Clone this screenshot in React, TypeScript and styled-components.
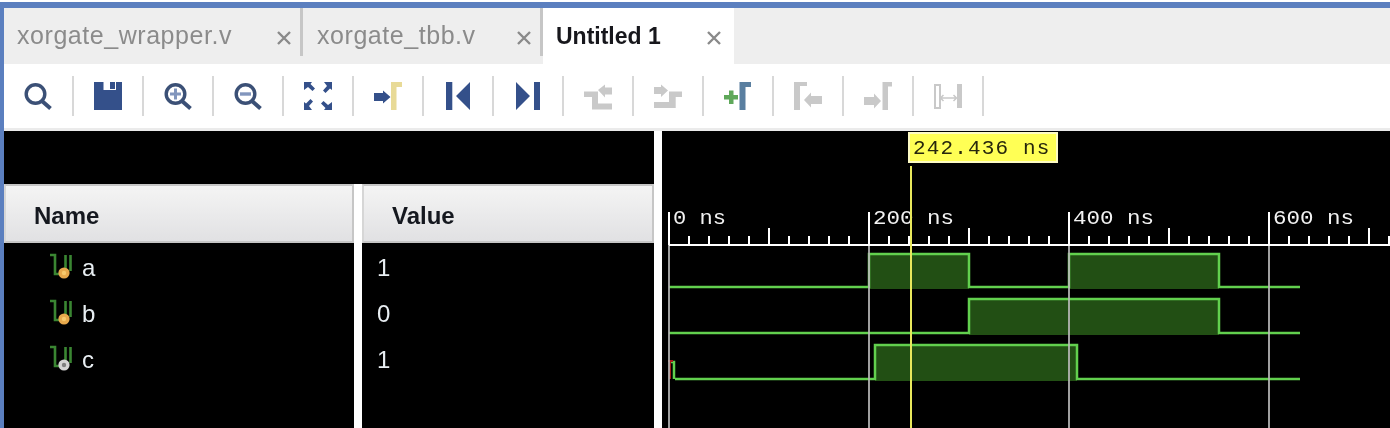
import React from "react";
import styled, { createGlobalStyle } from "styled-components";

const Global = createGlobalStyle`
  html, body { margin: 0; padding: 0; background: #fff; overflow: hidden; }
  body { font-family: "Liberation Sans", Arial, sans-serif; }
`;

const Frame = styled.div`
  width: 1390px; height: 428px; box-sizing: border-box; padding-top: 2px; overflow: hidden;
  display: flex; flex-direction: column; background: #fff;
`;
const Window = styled.div`
  flex: 1; min-height: 0; display: flex; flex-direction: column;
  border-top: 6px solid #5b7fbf; border-left: 4px solid #5b7fbf;
  filter: blur(0.45px);
`;
const TabBar = styled.div`
  height: 56px; flex: none; display: flex; background: #eeeeee;
`;
const Tab = styled.div<{ $w: number; $pad: number; $active?: boolean; $sep?: boolean }>`
  width: ${p => p.$w}px; box-sizing: border-box; height: ${p => (p.$active ? 56 : 48)}px;
  align-self: flex-start;
  display: flex; align-items: center; justify-content: space-between;
  padding-left: ${p => p.$pad}px; padding-right: ${p => (p.$active ? 12 : 8)}px;
  padding-top: ${p => (p.$active ? 0 : 8)}px;
  background: ${p => (p.$active ? "#fff" : "#eeeeee")};
  border-right: ${p => (p.$sep ? "3px solid #c6c6c6" : "none")};
`;
const TabLabel = styled.span<{ $active?: boolean }>`
  font-size: ${p => (p.$active ? 23 : 25)}px;
  font-weight: ${p => (p.$active ? 700 : 400)};
  letter-spacing: ${p => (p.$active ? 0 : 0.55)}px;
  color: ${p => (p.$active ? "#17171c" : "#8b8b8b")};
  line-height: 1; white-space: nowrap;
  position: relative; top: ${p => (p.$active ? 0 : -1)}px;
`;
const CloseIcon = styled.svg`
  width: 16px; height: 16px; flex: none; position: relative; top: 2px;
`;
const Toolbar = styled.div`
  height: 64px; flex: none; display: flex; align-items: center; background: #fff;
`;
const ToolCell = styled.div`
  width: 70px; height: 40px; box-sizing: border-box; flex: none;
  display: flex; align-items: center; justify-content: center;
  border-right: 2px solid #d8d8d8;
`;
const ToolIcon = styled.svg`
  width: 28px; height: 28px; display: block;
`;
const Strip = styled.div`
  height: 3px; flex: none; background: #ebebeb;
`;
const Panels = styled.div`
  flex: 1; min-height: 0; display: grid;
  grid-template-columns: 650px 1fr; column-gap: 8px; background: #fff;
`;
const LeftPane = styled.div`
  display: flex; flex-direction: column; min-height: 0;
`;
const BlackBand = styled.div`
  height: 53px; flex: none; background: #000;
`;
const TableColumns = styled.div`
  flex: 1; min-height: 0; display: grid; grid-template-columns: 350px 292px; column-gap: 8px;
`;
const Column = styled.div`
  background: #000; min-width: 0;
`;
const HeaderCell = styled.div<{ $pad: number }>`
  height: 59px; box-sizing: border-box; display: flex; align-items: center;
  padding-left: ${p => p.$pad}px; padding-top: 4px;
  background: linear-gradient(#f4f4f4, #e1e1e3);
  border: 2px solid #c6c6c6; border-left-color: #d6d6d6;
  font-size: 24px; font-weight: 700; color: #15181f;
`;
const Rows = styled.div`
  padding-top: 2px;
`;
const Row = styled.div<{ $pad: number }>`
  height: 46px; display: flex; align-items: center; gap: 9px;
  padding-left: ${p => p.$pad}px; color: #e8eef2; font-size: 24px;
`;
const SignalSvg = styled.svg`
  width: 23px; height: 28px; flex: none; position: relative; top: -1px;
`;
const Wave = styled.div`
  background: #000; position: relative; overflow: hidden;
`;
const WaveSvg = styled.svg`
  display: block; width: 728px; height: 297px;
`;
const TimeTag = styled.div`
  position: absolute; left: 246px; top: 1px; width: 150px; height: 31px; box-sizing: border-box;
  background: #ffff55; border: 2px solid #fdfbc4;
  display: flex; align-items: center; padding-left: 3px; padding-top: 2px;
  font-family: "Liberation Mono", monospace; font-size: 21px; letter-spacing: 1.15px;
  color: #26260c; white-space: nowrap;
`;

const BLUE = "#34508a";
const GREY = "#c9c9c9";

const icons: React.ReactNode[] = [
  <g key="s" fill="none" stroke="#3b5076">
    <circle cx="11.5" cy="12" r="9.3" strokeWidth="3.4" />
    <path d="M18 19l8.5 7.5" strokeWidth="4" />
  </g>,
  <path key="f" fill={BLUE} fillRule="evenodd" d="M0 0h9.5v8H22V0h6v28H0zM16 0h5v7h-5z" />,
  <g key="zi" fill="none" stroke="#3b5076">
    <circle cx="11.5" cy="12" r="9.3" strokeWidth="3.4" />
    <path d="M18 19l8.500 7.500" strokeWidth="4" />
    <path d="M6 12h11M11.500 6.500v11" stroke="#8296bd" strokeWidth="3" />
  </g>,
  <g key="zo" fill="none" stroke="#3b5076">
    <circle cx="11.5" cy="12" r="9.3" strokeWidth="3.4" />
    <path d="M18 19l8.500 7.500" strokeWidth="4" />
    <path d="M6 12h11" stroke="#8296bd" strokeWidth="3.4" />
  </g>,
  <path key="fit" fill={BLUE} d="M0 0h8l-1.500 2 4.500 4.500-2.500 2.500L4 5 0 8zM28 0v8l-2-1.500-4.500 4.500-2.500-2.500L23 4 20 0zM0 28v-8l2 1.500 4.500-4.500 2.500 2.500L5 24l3 4zM28 28h-8l1.500-2-4.500-4.500 2.500-2.500L24 23l4-3z" />,
  <g key="gm">
    <path fill="#e8da97" d="M17 0h11v5h-5.500v23H17z" />
    <path fill={BLUE} d="M0 11h9V8.500l7.500 6.500L9 21.500V19H0z" />
  </g>,
  <path key="ss" fill={BLUE} d="M2 0h6.300v28H2zM26 0v28L12 14z" />,
  <path key="se" fill={BLUE} d="M20 0h6v28h-6zM2 0v28l14-14z" />,
  <path key="pt" fill={GREY} d="M0 9.500h14v12h14v6H8V15H0zM14 8l7-5.500V5.500h7v7h-7v3z" />,
  <path key="nt" fill={GREY} d="M28 9.500H15V20H0v6h21.700V15H28zM0 5h7V2.500L14 8.500l-7 6.500v-3H0z" />,
  <g key="am">
    <path fill="#5a7fa0" d="M15.500 0H27v5h-5.500v23h-6z" />
    <path fill="#5fa85a" d="M5 8.500h4.500V13H14v4.500H9.500V22H5v-4.500H0V13h5z" />
  </g>,
  <g key="pm" fill={GREY}>
    <path d="M0 0h13v4H6v24H0z" />
    <path d="M10 18l7-7.500V14h11v8H17v3.500z" />
  </g>,
  <g key="nm" fill={GREY}>
    <path d="M18.500 0H28v4.500h-4v23.500h-5.500z" />
    <path d="M0 15h10v-3.500l7 7.500-7 7.500V23H0z" />
  </g>,
  <g key="d">
    <rect x="1" y="3" width="5" height="23" fill="#fff" stroke={GREY} strokeWidth="2" />
    <rect x="23" y="2" width="5.500" height="24" fill={GREY} />
    <path fill="none" stroke={GREY} strokeWidth="1.500" d="M6 16h17M9.500 13l-3 3 3 3M19.500 13l3 3-3 3" />
  </g>,
];

const Close = () => (
  <CloseIcon viewBox="0 0 16 16">
    <path d="M2 2l12 12M14 2L2 14" stroke="#8a8a8a" strokeWidth="2.4" fill="none" />
  </CloseIcon>
);

const Signal = ({ dot, core }: { dot: string; core: string }) => (
  <SignalSvg viewBox="0 0 23 28">
    <path d="M0 2h5v19h14M15.500 2v16M20.500 2v16" fill="none" stroke="#3a8632" strokeWidth="2.6" />
    <circle cx="14" cy="20" r="5.600" fill={dot} />
    <circle cx="14" cy="20" r="2.200" fill={core} />
  </SignalSvg>
);

const signals = [
  { name: "a", value: "1", dot: "#e8a94c", core: "#f7c96c" },
  { name: "b", value: "0", dot: "#e8a94c", core: "#f7c96c" },
  { name: "c", value: "1", dot: "#d4d4d4", core: "#808080" },
];

const LINE = "#62d04e";
const FILL = "#224f14";
const END = 1300;

const traces = [
  { low: 287, high: 254, pulses: [[869, 969], [1069, 1219]] },
  { low: 333, high: 299, pulses: [[969, 1219]] },
  { low: 379, high: 345, pulses: [[875, 1077]] },
];

const tracePath = (t: { low: number; high: number; pulses: number[][] }, start: number) => {
  let d = `M${start} ${t.low}`;
  t.pulses.forEach(([a, b]) => {
    d += `H${a}V${t.high}H${b}V${t.low}`;
  });
  return d + `H${END}`;
};

const ticks = Array.from({ length: 37 }, (_, i) => 669 + i * 20);
const labels = [
  { x: 669, text: "0 ns", len: 53 },
  { x: 869, text: "200 ns", len: 81 },
  { x: 1069, text: "400 ns", len: 81 },
  { x: 1269, text: "600 ns", len: 81 },
];

const Waveform = () => (
  <WaveSvg viewBox="662 131 728 297">
    {traces.map((t, i) =>
      t.pulses.map(([a, b]) => (
        <rect key={`${i}-${a}`} x={a} y={t.high} width={b - a} height={t.low - t.high + 2} fill={FILL} />
      ))
    )}
    {traces.map((t, i) => (
      <path key={i} d={tracePath(t, i === 2 ? 675 : 669)} fill="none" stroke={LINE} strokeWidth="2.500" />
    ))}
    <path d="M669 362h5v17" fill="none" stroke={LINE} strokeWidth="2.500" />
    <path d="M668 361h5M670 361v18" fill="none" stroke="#a51a1a" strokeWidth="2" />
    {labels.map(l => (
      <path key={l.x} d={`M${l.x} 245V428`} stroke="#bcbcbc" strokeWidth="2" opacity="0.85" />
    ))}
    {ticks.map((x, i) => (
      <path key={x} d={`M${x} ${i % 10 === 0 ? 212 : i % 5 === 0 ? 228 : 236}V245`} stroke="#fff" strokeWidth="2" />
    ))}
    <path d="M669 245H1390" stroke="#fff" strokeWidth="2" />
    {labels.map(l => (
      <text key={l.text} x={l.x + 4} y="224" fill="#f2f2f2" fontFamily="Liberation Mono, monospace" fontSize="20"
        textLength={l.len} lengthAdjust="spacingAndGlyphs">{l.text}</text>
    ))}
    <path d="M911 166V428" stroke="#e8e85c" strokeWidth="2" />
  </WaveSvg>
);

export default function App() {
  return (
    <Frame>
      <Global />
      <Window>
        <TabBar>
          <Tab $w={299} $pad={13} $sep>
            <TabLabel>xorgate_wrapper.v</TabLabel>
            <Close />
          </Tab>
          <Tab $w={240} $pad={14} $sep>
            <TabLabel>xorgate_tbb.v</TabLabel>
            <Close />
          </Tab>
          <Tab $w={191} $pad={13} $active>
            <TabLabel $active>Untitled 1</TabLabel>
            <Close />
          </Tab>
        </TabBar>
        <Toolbar>
          {icons.map((icon, i) => (
            <ToolCell key={i}>
              <ToolIcon viewBox="0 0 28 28">{icon}</ToolIcon>
            </ToolCell>
          ))}
        </Toolbar>
        <Strip />
        <Panels>
          <LeftPane>
            <BlackBand />
            <TableColumns>
              <Column>
                <HeaderCell $pad={28}>Name</HeaderCell>
                <Rows>
                  {signals.map(s => (
                    <Row key={s.name} $pad={46}>
                      <Signal dot={s.dot} core={s.core} />
                      <span>{s.name}</span>
                    </Row>
                  ))}
                </Rows>
              </Column>
              <Column>
                <HeaderCell $pad={28}>Value</HeaderCell>
                <Rows>
                  {signals.map(s => (
                    <Row key={s.name} $pad={15}>{s.value}</Row>
                  ))}
                </Rows>
              </Column>
            </TableColumns>
          </LeftPane>
          <Wave>
            <Waveform />
            <TimeTag>242.436 ns</TimeTag>
          </Wave>
        </Panels>
      </Window>
    </Frame>
  );
}
